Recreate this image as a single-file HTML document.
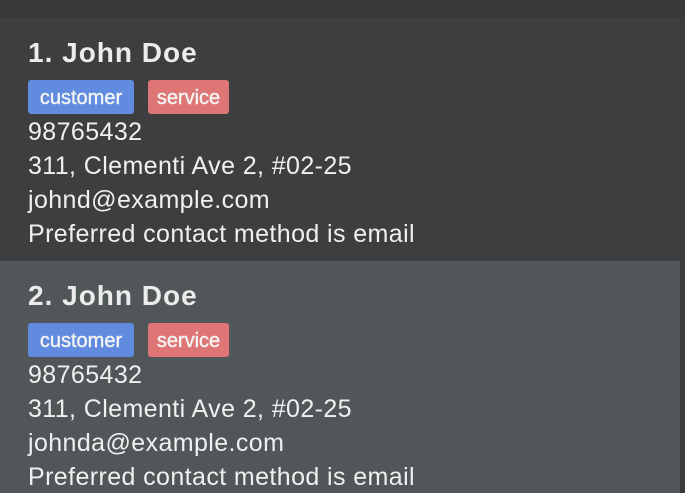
<!DOCTYPE html><html><head><style>
body{margin:0;width:685px;height:493px;overflow:hidden;background:#3b3b3b;font-family:"Liberation Sans",sans-serif;color:#fff}
.top{position:absolute;left:0;top:0;width:685px;height:18px;background:#383838}
.row{position:absolute;left:0;width:680px;height:243px}
.name{position:absolute;left:28px;top:18px;font-size:28px;font-weight:bold;line-height:34px;color:#ececec;letter-spacing:1px}
.tag{position:absolute;top:62px;height:34px;line-height:37px;font-size:20px;border-radius:3px;color:#f4f4f4;text-align:center;white-space:nowrap;-webkit-text-stroke:0.4px #f4f4f4}
.l{position:absolute;left:28px;font-size:25px;line-height:30px;color:#f0f0f0;letter-spacing:0.4px;white-space:nowrap}
</style></head><body>
<div class="top"></div>
<div class="row" style="top:18px;background:#3c3e40">
<div class="name">1. John Doe</div>
<div class="tag" style="left:28px;width:106px;background:#608bdf">customer</div>
<div class="tag" style="left:148px;width:81px;background:#df7676">service</div>
<div class="l" style="top:99px">98765432</div>
<div class="l" style="top:133px">311, Clementi Ave 2, #02-25</div>
<div class="l" style="top:167px">johnd@example.com</div>
<div class="l" style="top:201px">Preferred contact method is email</div>
</div>
<div class="row" style="top:261px;height:232px;background:#515658">
<div class="name">2. John Doe</div>
<div class="tag" style="left:28px;width:106px;background:#608bdf">customer</div>
<div class="tag" style="left:148px;width:81px;background:#df7676">service</div>
<div class="l" style="top:99px">98765432</div>
<div class="l" style="top:133px">311, Clementi Ave 2, #02-25</div>
<div class="l" style="top:167px">johnda@example.com</div>
<div class="l" style="top:201px">Preferred contact method is email</div>
</div>
</body></html>
